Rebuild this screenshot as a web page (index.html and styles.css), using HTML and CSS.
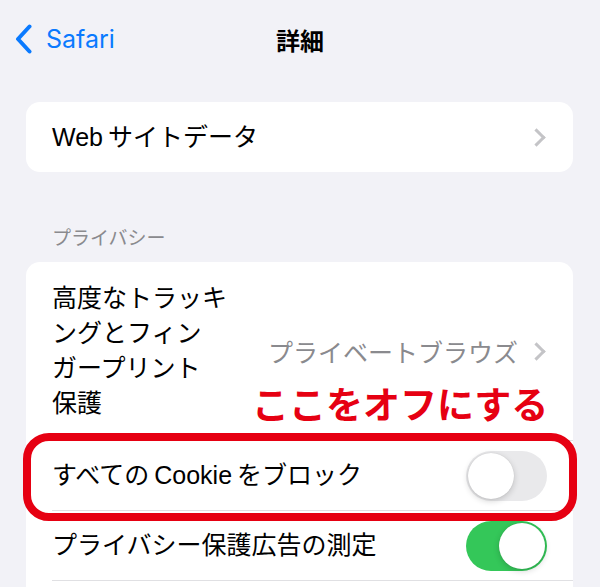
FILE: index.html
```html
<!DOCTYPE html>
<html lang="ja">
  <head>
    <meta charset="UTF-8" />
    <meta name="viewport" content="width=device-width, initial-scale=1.0" />
    <title>詳細</title>
    <link rel="stylesheet" href="styles.css">
  </head>
  <body>
    <div class="screen">
      <header class="navbar">
        <a class="back" href="#">
          <svg class="back-icon" viewBox="0 0 17 30" width="17" height="30">
            <path d="M14.5 2.5 L3 15 L14.5 27.5" fill="none" stroke="#0a7aff" stroke-width="4" stroke-linecap="round" stroke-linejoin="round" />
          </svg>
          <span>Safari</span>
        </a>
        <h1>詳細</h1>
        <div></div>
      </header>

      <main class="content">
        <section class="group">
          <div class="row">
            <span class="label">Web&thinsp;サイトデータ</span>
            <span class="chevron"></span>
          </div>
        </section>

        <h2 class="group-title">プライバシー</h2>

        <section class="group">
          <div class="row row-tall">
            <span class="label label-wrap">高度なトラッキ<br>ングとフィン<br>ガープリント<br>保護</span>
            <span class="value">プライベートブラウズ</span>
            <span class="chevron"></span>
          </div>
          <div class="row">
            <span class="label">すべての&thinsp;Cookie&thinsp;をブロック</span>
            <span class="toggle"><span class="knob"></span></span>
          </div>
          <div class="row">
            <span class="label">プライバシー保護広告の測定</span>
            <span class="toggle on"><span class="knob"></span></span>
          </div>
          <div class="row">
            <span class="label">&nbsp;</span>
          </div>
        </section>
      </main>

      <!-- annotation on top of the screenshot -->
      <div class="note">ここをオフにする</div>
      <div class="highlight"></div>
    </div>
  </body>
</html>
```

FILE: styles.css
```css
body {
  margin: 0;
  padding: 0;
  background-color: #f2f2f7;
  font-family: "Liberation Sans", "Noto Sans CJK JP", sans-serif;
  color: #000;
}

.screen {
  position: relative;
  width: 600px;
  height: 587px;
  overflow: hidden;
}

.navbar {
  display: grid;
  grid-template-columns: 1fr auto 1fr;
  align-items: center;
  height: 78px;
}

.back {
  display: flex;
  align-items: center;
  gap: 14px;
  padding-left: 15px;
  color: #0a7aff;
  text-decoration: none;
  font-family: Inter, sans-serif;
  font-size: 25px;
}

.back-icon {
  display: block;
}

.navbar h1 {
  margin: 0;
  font-size: 24px;
  font-weight: 700;
  font-family: "Noto Sans CJK JP", sans-serif;
}

.content {
  padding: 24px 27px 0 26px;
}

.group {
  background: #fff;
  border-radius: 14px;
  overflow: hidden;
}

.row {
  display: flex;
  align-items: center;
  height: 70px;
  margin-left: 26px;
  padding-right: 26px;
  border-bottom: 1px solid #e0e0e3;
  box-sizing: border-box;
}

.group .row:last-child {
  border-bottom: none;
}

.row-tall {
  height: 179px;
}

.label {
  flex: 1;
  font-size: 25px;
  line-height: 35px;
  white-space: nowrap;
}

.label-wrap {
  flex: none;
  width: 190px;
}

.value {
  flex: 1;
  text-align: right;
  color: #8a8a8e;
  font-size: 25px;
  font-family: "Noto Sans CJK JP", sans-serif;
  white-space: nowrap;
  margin-right: 12px;
}

.chevron {
  width: 10px;
  height: 10px;
  border-top: 3px solid #c4c4c7;
  border-right: 3px solid #c4c4c7;
  transform: rotate(45deg);
  margin-right: 4px;
}

.group-title {
  margin: 53px 0 14px 26px;
  font-size: 19px;
  line-height: 23px;
  font-weight: 400;
  color: #8a8a8e;
  font-family: "Noto Sans CJK JP", sans-serif;
}

.toggle {
  position: relative;
  width: 81px;
  height: 50px;
  border-radius: 25px;
  background: #e9e9eb;
  flex: none;
}

.toggle .knob {
  position: absolute;
  top: 2px;
  left: 2px;
  width: 46px;
  height: 46px;
  border-radius: 50%;
  background: #fff;
  box-shadow: 0 2px 6px rgba(0, 0, 0, 0.18), 0 0 1px rgba(0, 0, 0, 0.15);
}

.toggle.on {
  background: #34c759;
}

.toggle.on .knob {
  left: 33px;
}

.note {
  position: absolute;
  top: 381px;
  left: 252px;
  color: #e60012;
  font-family: "Noto Sans CJK JP", sans-serif;
  font-weight: 700;
  font-size: 37px;
  line-height: 44px;
}

.highlight {
  position: absolute;
  top: 433px;
  left: 23px;
  width: 554px;
  height: 88px;
  border: 8px solid #e60012;
  border-radius: 26px;
  box-sizing: border-box;
}
```
